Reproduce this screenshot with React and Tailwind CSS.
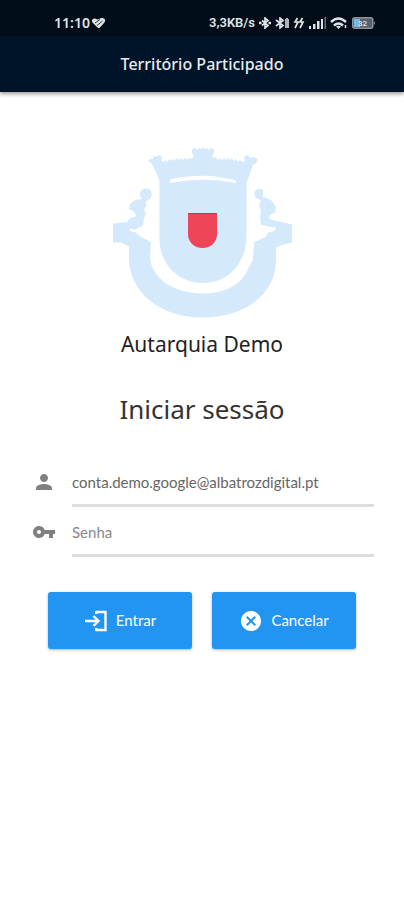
import { MdCancel, MdPerson, MdVpnKey } from "react-icons/md";

function StatusBar() {
  return (
    <div className="flex h-9 items-center justify-between bg-[#010d18] pt-2.5 pr-7 pl-[54px] font-[Roboto,sans-serif] text-[#dfe3e6]">
      <div className="flex items-center gap-px">
        <span className="font-['Noto_Sans',sans-serif] text-sm font-semibold">11:10</span>
        <svg className="h-3 w-[15px]" viewBox="0 0 15 12" fill="none">
          <path d="M7 11 1.500 5.500C-.5 3 3 .5 5 2l2 .5C9 1 11.500.5 13 1.500c2 1.500 1 3.500 0 4.500L8.500 11Z" fill="#dfe3e6" />
          <path d="m4 6 5-3.500M6 8.500 11.500 4" stroke="#010d18" strokeWidth=".8" />
        </svg>
      </div>
      <div className="flex items-center gap-1">
        <span className="text-[13px] font-semibold">3,3KB/s</span>
        <svg className="h-3 w-3" viewBox="0 0 12 12" fill="none" stroke="#dfe3e6" strokeWidth="1.700">
          <path d="m3 3.500 6 5L6 11V1l3 2.500-6 5" />
          <path d="M0 6h2.500M9.500 6H12" strokeWidth="2.500" />
        </svg>
        <svg className="h-3 w-[14px]" viewBox="0 0 14 12" fill="none" stroke="#dfe3e6" strokeWidth="1.700">
          <path d="m1 3 7 5.500L5 11V1l3 2.500L1 9" />
          <path d="M11 1h2v1h1v9h-4V2h1Z" fill="#aeb4b9" stroke="none" />
        </svg>
        <svg className="h-3 w-3" viewBox="0 0 12 12" fill="none" stroke="#dfe3e6" strokeWidth="1.700">
          <path d="M4.500 1 2 5h3L2 11M9.500 1 7 5h3L7 11" />
        </svg>
        <svg className="h-3 w-[17px]" viewBox="0 0 17 12" fill="#dfe3e6">
          <path d="M0 9h2v3H0ZM4 7h2.500v5H4ZM8 4h2.500v8H8ZM12 2h2v10h-2Z" />
          <path d="M15.500 0H17v12h-1.500Z" fill="#66717b" />
        </svg>
        <svg className="h-3 w-[18px]" viewBox="0 0 18 12" fill="none" stroke="#dfe3e6" strokeWidth="2.500">
          <path d="M1 5q7.500-7 15 0M4 8.500q4.500-4 9 0" />
          <path d="m8.500 12-2.500-2.500q2.500-1.500 5 0Z" fill="#dfe3e6" stroke="none" />
          <path d="M15.500 8v3" strokeWidth="1.500" />
        </svg>
        <svg className="h-3 w-6" viewBox="0 0 24 12">
          <rect x=".75" y=".75" width="20" height="10.500" rx="2" fill="#56616b" stroke="#89939b" strokeWidth="1.500" />
          <path d="M2 2h6v8H2Z" fill="#75b9e7" />
          <path d="M22 4q2 2 0 4Z" fill="#89939b" />
          <text x="6" y="9" fontSize="8" fontWeight="600" fill="#dfe3e6">32</text>
        </svg>
      </div>
    </div>
  );
}

function Crest() {
  return (
    <svg className="h-[172px] w-[180px]" viewBox="112 147 180 172" role="img" aria-label="Autarquia Demo">
      <g fill="#d5e9fd">
        <path d="M148 161L150 159 153 159 153 156 156 157 158 155 161 156 162 158 161 161 164 162 165 160 167 162 169 159 171 161 173 159 175 160 177 158 179 160 181 158 183 160 185 158 187 160 189 158 191 159 194 156 192 153 192 149 195 148 197 150 199 148 201 149 203 147 205 149 207 148 209 150 211 148 214 149 214 153 212 156 214 158 216 157 218 160 220 158 222 160 224 158 226 160 228 158 230 160 232 158 234 161 236 159 238 162 240 160 242 162 245 161 244 158 245 156 248 155 250 158 253 157 256 158 258 160 256 163 253 165 248 179 246.500 183V236C246 264 228 283 203 283S160 264 159.500 240V181L154 168 152 164Z" />
        <path d="M113 223.500 127 222l3-4 5-1 1-2-3-4-4-2 1-5 5-4 7-1-2-3C139 191 143 188 147 188.500c5 .5 6 7 3 10l-4 3v5l-2 3 2 4-2 5-1 7-8 4-6-1 2 3 5 1 4 4 8 4 3 2-1 14C151 279 175 293.500 203 293.500c23 0 37-9 44-22l6-12 1-17 6-3 6-3 2-4 7-2 1-3-8-1-7-2-1-7 1-6-2-6 2-5-4-2C251 194 256 186 263 190v7l6 2 3 2 4 6-1 5-5 3-1 4 8 2 15 3.500v18l-9 2-7 3v14c-1 33-31 56-74 56s-72-26-73-58v-13l-8-4-8 0Z" />
      </g>
      <path d="M170 183v-3.500Q203 171.500 236 180.500V183Q203 176.500 170 183Z" fill="#fff" />
      <path d="M188 213h29v21c0 8-6 14-14.500 14S188 242 188 234Z" fill="#ef4559" />
      <path d="M188 213h29v1h-29Z" fill="#c8324c" />
    </svg>
  );
}

function Field({ id, label, type, value, icon }) {
  return (
    <div className="flex h-[50px] items-center">
      <label htmlFor={id} aria-label={label} className="flex w-10 items-center text-[#808080]">{icon}</label>
      <input
        id={id}
        type={type}
        defaultValue={value}
        placeholder={label}
        className="h-full min-w-0 flex-1 border-b-[3px] border-[#dedede] bg-transparent pt-0.5 font-[Lato,sans-serif] text-[15px] text-[#666] outline-none placeholder:text-[#888]"
      />
    </div>
  );
}

function LoginIcon() {
  return (
    <svg className="h-6 w-6" viewBox="0 0 24 24" fill="none" stroke="currentColor" strokeWidth="2.400">
      <path d="M12 3h9.500v18H12M12.200 2v3M12.200 19v3" />
      <path d="M1 12h13M9.500 7l5 5-5 5" />
    </svg>
  );
}

const action =
  "flex h-[57px] flex-1 items-center justify-center gap-2 rounded-[3px] bg-[#2295f2] font-[Lato,sans-serif] text-[15px] text-white shadow-[0_1px_3px_rgba(0,0,0,0.3)]";

export default function App() {
  return (
    <div className="min-h-screen bg-white font-['Noto_Sans',sans-serif]">
      <header className="bg-[#001429] shadow-[0_2px_4px_rgba(0,0,0,0.4)]">
        <StatusBar />
        <div className="flex h-14 items-center justify-center text-base font-medium text-[#e8eaec]">
          Território Participado
        </div>
      </header>
      <main className="flex flex-col items-center pt-[55px]">
        <Crest />
        <h2 className="mt-[9px] text-[21px] leading-8 text-[#222]">Autarquia Demo</h2>
        <h1 className="mt-[29px] text-[26px] leading-10 text-[#333]">Iniciar sessão</h1>
        <form className="mt-7 w-full" onSubmit={(e) => e.preventDefault()}>
          <div className="pr-[30px] pl-8">
            <Field id="email" label="Email" type="text" value="conta.demo.google@albatrozdigital.pt" icon={<MdPerson className="h-6 w-6" />} />
            <Field id="password" label="Senha" type="password" icon={<MdVpnKey className="h-6 w-6" />} />
          </div>
          <div className="mt-[35px] flex gap-5 px-12">
            <button type="submit" className={action}>
              <LoginIcon />
              Entrar
            </button>
            <button type="button" className={action}>
              <MdCancel className="h-6 w-6" />
              Cancelar
            </button>
          </div>
        </form>
      </main>
    </div>
  );
}
